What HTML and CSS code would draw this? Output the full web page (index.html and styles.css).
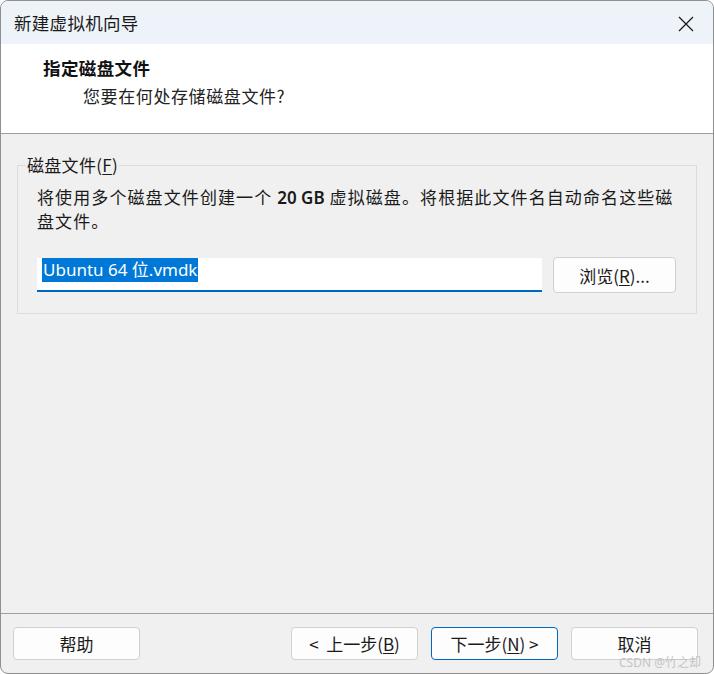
FILE: index.html
```html
<!DOCTYPE html>
<html lang="zh-CN">
<head>
<meta charset="utf-8">
<title>新建虚拟机向导</title>
<link rel="stylesheet" href="styles.css">
</head>
<body>
<div class="window">
  <div class="titlebar">
    <span class="title">新建虚拟机向导</span>
    <svg class="close" width="16" height="16" viewBox="0 0 16 16">
      <path d="M1 1 L15 15 M15 1 L1 15" stroke="#1b1b1b" stroke-width="1.3" fill="none"/>
    </svg>
  </div>
  <div class="header">
    <div class="h-title">指定磁盘文件</div>
    <div class="h-sub">您要在何处存储磁盘文件?</div>
  </div>
  <div class="body">
    <fieldset class="group">
      <legend class="legend">磁盘文件(<u>F</u>)</legend>
      <div class="desc"><span class="line">将使用多个磁盘文件创建一个 <b class="num">20 GB</b> 虚拟磁盘。将根据此文件名自动命名这些磁</span><span class="line">盘文件。</span></div>
      <div class="row">
        <div class="input"><span class="sel">Ubuntu 64 位.vmdk</span></div>
        <div class="btn browse">浏览(<u>R</u>)...</div>
      </div>
    </fieldset>
  </div>
  <div class="footer">
    <div class="btn">帮助</div>
    <div class="spacer"></div>
    <div class="btn">&lt;&nbsp; 上一步(<u>B</u>)</div>
    <div class="btn default">下一步(<u>N</u>) &gt;</div>
    <div class="btn">取消</div>
  </div>
  <div class="watermark">CSDN @竹之却</div>
</div>
</body>
</html>
```
FILE: styles.css
```css
* { box-sizing: border-box; }
html, body { margin: 0; padding: 0; background: #ffffff; }
body {
  font-family: "Noto Sans", "Noto Sans CJK SC", sans-serif;
  color: #1a1a1a;
}
.window {
  position: relative;
  width: 714px;
  height: 674px;
  border: 1px solid #8f8f8f;
  border-radius: 8px;
  overflow: hidden;
  display: flex;
  flex-direction: column;
  background: #f0f0f0;
}
.titlebar {
  height: 43px;
  flex: none;
  background: #eef3f9;
  display: flex;
  align-items: center;
  justify-content: space-between;
  padding: 0 19px 0 13px;
}
.title {
  font-family: "Noto Sans CJK SC", sans-serif;
  font-size: 17.5px;
  color: #1a1a1a;
  letter-spacing: 0.3px;
}
.close { display: block; margin-top: 2px; }
.header {
  height: 90px;
  flex: none;
  background: #ffffff;
  border-bottom: 1px solid #a0a0a0;
  padding: 11px 0 0 42px;
  font-family: "Noto Sans CJK SC", sans-serif;
}
.h-title {
  font-size: 17.5px;
  font-weight: 700;
  line-height: 26px;
  color: #111;
  letter-spacing: 0.4px;
}
.h-sub {
  font-size: 17px;
  line-height: 26px;
  margin-left: 40px;
  margin-top: 2px;
  color: #222;
  letter-spacing: 0.6px;
}
.body {
  flex: 1;
  padding: 19px 16px 0 16px;
}
.group {
  margin: 0;
  border: 1px solid #dcdcdc;
  padding: 0 19px 20px 19px;
  font-family: "Noto Sans CJK SC", sans-serif;
}
.legend {
  margin-left: -11px;
  padding: 0 1px;
  font-size: 17px;
  line-height: 24px;
  color: #1a1a1a;
  letter-spacing: 0.3px;
}
.desc {
  margin-top: 8px;
  font-size: 17px;
  line-height: 23px;
  color: #1a1a1a;
  letter-spacing: 1.1px;
}
.line { display: block; white-space: nowrap; }
.num {
  font-family: "Noto Sans", sans-serif;
  font-weight: 600;
  letter-spacing: 0;
}
.row {
  margin-top: 25px;
  display: flex;
  align-items: center;
  gap: 11px;
}
.input {
  width: 505px;
  height: 34px;
  background: #ffffff;
  border-bottom: 2px solid #0067c0;
  padding-left: 5px;
  display: flex;
  align-items: flex-start;
}
.sel {
  background: #0078d7;
  color: #ffffff;
  font-family: "Noto Sans", "Noto Sans CJK SC", sans-serif;
  font-size: 17px;
  line-height: 24px;
  padding: 0 1px;
}
.btn {
  width: 127px;
  height: 33px;
  background: #fdfdfd;
  border: 1px solid #d0d0d0;
  border-radius: 4px;
  display: flex;
  align-items: center;
  justify-content: center;
  font-family: "Noto Sans CJK SC", sans-serif;
  font-size: 17px;
  color: #1a1a1a;
  flex: none;
}
.btn.browse {
  width: 123px;
  height: 36px;
}
.btn.default { border-color: #0067c0; }
.footer {
  flex: none;
  height: 60px;
  border-top: 1px solid #a0a0a0;
  padding: 13px 15px 0 12px;
  display: flex;
  align-items: flex-start;
  gap: 13px;
}
.spacer { flex: 1; }
.watermark {
  position: absolute;
  right: 12px;
  bottom: 3px;
  font-family: "Noto Sans", "Noto Sans CJK SC", sans-serif;
  font-size: 12px;
  line-height: 14px;
  color: #c4c4c4;
}
u { text-decoration: underline; text-underline-offset: 2px; }
```
